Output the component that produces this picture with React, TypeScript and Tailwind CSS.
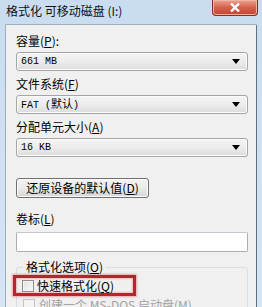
import React from "react";

const cjk = '"Noto Sans CJK SC", "Liberation Sans", sans-serif';

function Key({ k }: { k: string }) {
    return (
        <span>
            (<span className="underline underline-offset-1">{k}</span>)
        </span>
    );
}

function Combo({ children }: { children: React.ReactNode }) {
    return (
        <div className="flex h-[19px] items-center rounded-[3px] border border-[#a5a5a5] bg-gradient-to-b from-[#f4f4f4] via-[#ececec] to-[#dcdcdc] pl-[4px] pr-[7px] shadow-[inset_0_0_0_1px_#fbfbfb]">
            <div className="flex-1 font-['Liberation_Mono'] text-[10px] leading-none text-black">{children}</div>
            <svg width="8" height="5" viewBox="0 0 8 5">
                <path d="M0 0h8L4 5z" fill="#000" />
            </svg>
        </div>
    );
}

function Label({ text, k, colon }: { text: string; k: string; colon?: boolean }) {
    return (
        <div className="text-[12px] leading-[16px] text-black">
            {text}
            <Key k={k} />
            {colon ? ":" : ""}
        </div>
    );
}

export default function App() {
    return (
        <div
            className="flex h-[307px] w-[262px] flex-col overflow-hidden bg-gradient-to-b from-[#c9dcf0] to-[#d6e5f4]"
            style={{ fontFamily: cjk }}
        >
            {/* title bar */}
            <div className="flex h-[24px] shrink-0 items-start justify-between pl-[6px]">
                <div className="pt-[3px] text-[12px] leading-[16px] text-[#111]">
                    格式化 可移动磁盘 (I:)
                </div>
                <div className="mr-[4px] flex h-[16px] w-[46px] items-center justify-center rounded-b-[4px] border border-t-0 border-[#7a3226] bg-gradient-to-b from-[#e9a493] via-[#d5614b] to-[#c2452f] shadow-[inset_0_0_0_1px_#f0b3a4]">
                    <svg width="10" height="9" viewBox="0 0 10 9">
                        <path d="M1 0.5 L9 8.5 M9 0.5 L1 8.5" stroke="#fff" strokeWidth="2.4" />
                    </svg>
                </div>
            </div>

            {/* client area */}
            <div className="mx-[5px] flex-1 rounded-t-[2px] border border-[#9fadbc] border-r-[#5f6e80] bg-[#f0f0f0] pl-[10px] pr-[8px] pt-[8px]">
                <Label text="容量" k="P" colon />
                <div className="mt-[3px]">
                    <Combo>661 MB</Combo>
                </div>

                <div className="mt-[5px]">
                    <Label text="文件系统" k="F" />
                </div>
                <div className="mt-[3px]">
                    <Combo>
                        FAT (<span className="text-[11px]" style={{ fontFamily: cjk }}>默认</span>)
                    </Combo>
                </div>

                <div className="mt-[5px]">
                    <Label text="分配单元大小" k="A" />
                </div>
                <div className="mt-[3px]">
                    <Combo>16 KB</Combo>
                </div>

                <button className="mt-[21px] flex h-[20px] w-[133px] items-center justify-center rounded-[3px] border border-[#707070] bg-gradient-to-b from-[#f2f2f2] via-[#ebebeb] to-[#d6d6d6] text-[12px] leading-none text-black shadow-[inset_0_0_0_1px_#fcfcfc]">
                    还原设备的默认值<Key k="D" />
                </button>

                <div className="mt-[13px]">
                    <Label text="卷标" k="L" />
                </div>
                <div className="mt-[5px] h-[20px] rounded-[2px] border border-[#abadb3] border-t-[#c3c6cc] bg-white" />

                <fieldset className="mt-[7px] rounded-[3px] border border-[#d5dfe5] pb-[4px]">
                    <legend className="ml-[6px] px-[3px] text-[12px] leading-[16px] text-black">
                        格式化选项<Key k="O" />
                    </legend>
                    <div className="-ml-[4px] flex h-[21px] w-[123px] items-center border-[3px] border-[#b3262c] pl-[6px] shadow-[0_0_2px_1px_#e8a2a4,inset_0_0_2px_1px_#f0b8ba]">
                        <div className="h-[12px] w-[12px] border border-[#8f8f8f] bg-gradient-to-br from-[#e0e0e0] to-[#fafafa] shadow-[inset_0_0_0_1px_#f4f4f4]" />
                        <span className="ml-[3px] text-[12px] leading-none text-black">
                            快速格式化<Key k="Q" />
                        </span>
                    </div>
                    <div className="mt-[3px] flex items-center pl-[6px]">
                        <div className="h-[12px] w-[12px] border border-[#c4c4c4] bg-[#f4f4f4]" />
                        <span className="ml-[4px] text-[12px] leading-none text-[#a3a3a3]">
                            创建一个 MS-DOS 启动盘<Key k="M" />
                        </span>
                    </div>
                </fieldset>
            </div>
        </div>
    );
}
